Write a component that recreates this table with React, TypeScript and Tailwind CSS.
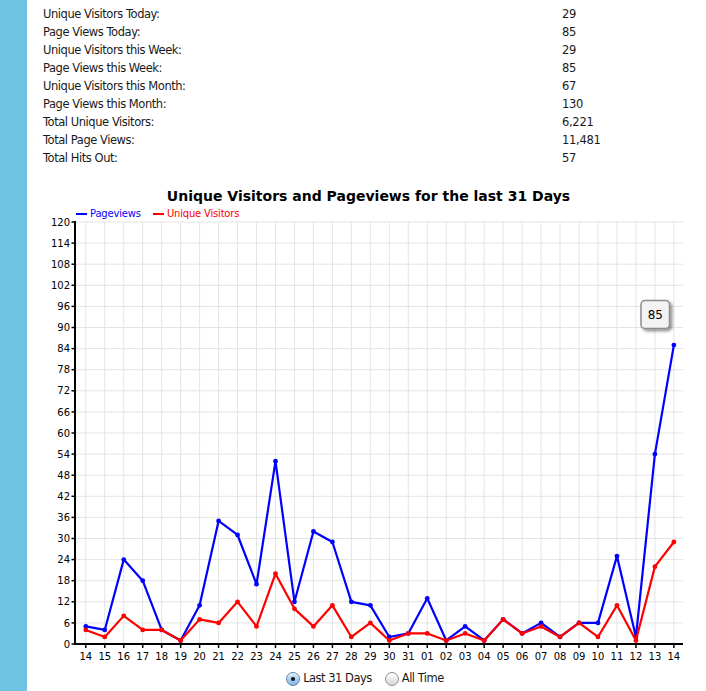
const stats: [string, string][] = [
  ["Unique Visitors Today:", "29"],
  ["Page Views Today:", "85"],
  ["Unique Visitors this Week:", "29"],
  ["Page Views this Week:", "85"],
  ["Unique Visitors this Month:", "67"],
  ["Page Views this Month:", "130"],
  ["Total Unique Visitors:", "6,221"],
  ["Total Page Views:", "11,481"],
  ["Total Hits Out:", "57"],
];

const days = [
  "14", "15", "16", "17", "18", "19", "20", "21", "22", "23", "24", "25", "26", "27", "28", "29", "30", "31",
  "01", "02", "03", "04", "05", "06", "07", "08", "09", "10", "11", "12", "13", "14",
];

const pageviews = [5, 4, 24, 18, 4, 1, 11, 35, 31, 17, 52, 12, 32, 29, 12, 11, 2, 3, 13, 1, 5, 1, 7, 3, 6, 2, 6, 6, 25, 2, 54, 85];
const visitors = [4, 2, 8, 4, 4, 1, 7, 6, 12, 5, 20, 10, 5, 11, 2, 6, 1, 3, 3, 1, 3, 1, 7, 3, 5, 2, 6, 2, 11, 1, 22, 29];

// chart geometry in page pixels
const X0 = 85.8;
const DX = 18.97;
const AXIS_X = 75;
const RIGHT = 683;
const TOP = 222;
const BOTTOM = 644;
const PX_PER_UNIT = (BOTTOM - TOP) / 120;

const px = (i: number) => X0 + i * DX;
const py = (v: number) => BOTTOM - v * PX_PER_UNIT;

const yTicks = Array.from({ length: 21 }, (_, i) => i * 6);

const Series = ({ data, color }: { data: number[]; color: string }) => (
  <g>
    <polyline
      points={data.map((v, i) => `${px(i)},${py(v)}`).join(" ")}
      fill="none"
      stroke={color}
      strokeWidth={2.2}
      strokeLinejoin="round"
    />
    {data.map((v, i) => (
      <circle key={i} cx={px(i)} cy={py(v)} r={2.4} fill={color} />
    ))}
  </g>
);

const Chart = () => (
  <svg
    width={679}
    height={488}
    viewBox="27 180 679 488"
    className="mt-[13px] block"
    fontFamily="'DejaVu Sans', sans-serif"
  >
    <defs>
      <filter id="tipShadow" x="-30%" y="-30%" width="170%" height="170%">
        <feDropShadow dx="2" dy="2" stdDeviation="1.5" floodColor="#000" floodOpacity="0.45" />
      </filter>
    </defs>

    <text x={368.5} y={200.7} textAnchor="middle" fontSize={14} fontWeight="bold" fill="#000">
      Unique Visitors and Pageviews for the last 31 Days
    </text>

    {/* legend */}
    <line x1={76} x2={87} y1={214} y2={214} stroke="#0000ff" strokeWidth={2} />
    <text x={90} y={217.4} fontSize={10} fill="#0000ff" letterSpacing={-0.2}>
      Pageviews
    </text>
    <line x1={153} x2={164} y1={214} y2={214} stroke="#ff0000" strokeWidth={2} />
    <text x={167} y={217.4} fontSize={10} fill="#ff0000" letterSpacing={-0.2}>
      Unique Visitors
    </text>

    {/* grid */}
    {yTicks.map((v) => (
      <line key={`h${v}`} x1={AXIS_X} x2={RIGHT} y1={py(v)} y2={py(v)} stroke="#e4e4e4" strokeWidth={1} />
    ))}
    {days.map((_, i) => (
      <line key={`v${i}`} x1={px(i)} x2={px(i)} y1={TOP} y2={BOTTOM} stroke="#e4e4e4" strokeWidth={1} />
    ))}

    {/* axes */}
    <line x1={AXIS_X} x2={AXIS_X} y1={TOP - 1} y2={BOTTOM + 1} stroke="#000" strokeWidth={2} />
    <line x1={AXIS_X - 1} x2={RIGHT} y1={BOTTOM} y2={BOTTOM} stroke="#000" strokeWidth={2} />

    {yTicks.map((v) => (
      <g key={`yt${v}`}>
        <line x1={71.5} x2={AXIS_X} y1={py(v)} y2={py(v)} stroke="#000" strokeWidth={1.5} />
        <text x={70} y={py(v) + 3.6} textAnchor="end" fontSize={10} fill="#000">
          {v}
        </text>
      </g>
    ))}

    {days.map((d, i) => (
      <g key={`xt${i}`}>
        <line x1={px(i)} x2={px(i)} y1={BOTTOM} y2={BOTTOM + 4} stroke="#000" strokeWidth={1.5} />
        <text x={px(i)} y={660} textAnchor="middle" fontSize={10} fill="#000">
          {d}
        </text>
      </g>
    ))}

    <Series data={pageviews} color="#0000ff" />
    <Series data={visitors} color="#ff0000" />

    {/* tooltip */}
    <rect
      x={641}
      y={300.5}
      width={28.5}
      height={28}
      rx={4}
      fill="#f3f3f3"
      stroke="#8c8c8c"
      strokeWidth={1.5}
      filter="url(#tipShadow)"
    />
    <text x={655.3} y={318.8} textAnchor="middle" fontSize={12} fill="#000">
      85
    </text>
  </svg>
);

const Radio = ({ checked, label }: { checked?: boolean; label: string }) => (
  <label className="flex items-center gap-[3px]">
    <span
      className={
        checked
          ? "flex h-[14px] w-[14px] items-center justify-center rounded-full border border-[#5b7fa6] bg-gradient-to-b from-[#d9ecfb] to-[#7fb6e6] shadow-[inset_0_1px_1px_rgba(255,255,255,0.8)]"
          : "flex h-[14px] w-[14px] items-center justify-center rounded-full border border-[#8e8e8e] bg-gradient-to-b from-[#ffffff] to-[#d6d6d6]"
      }
    >
      {checked && <span className="h-[4px] w-[4px] rounded-full bg-[#111]" />}
    </span>
    <span className="text-[11.5px] tracking-[-0.5px]">{label}</span>
  </label>
);

export default function App() {
  return (
    <div className="flex min-h-[691px] w-[706px] bg-white font-['DejaVu_Sans',sans-serif] text-[11.5px] text-[#1a1a1a]">
      <div className="w-[27px] shrink-0 bg-[#6fc3e2]" />
      <div className="flex-1">
        <div className="pl-[16px] pt-[5px]">
          {stats.map(([label, value]) => (
            <div key={label} className="flex h-[18px] items-center leading-[18px]">
              <span className="w-[519px] tracking-[-0.45px]">{label}</span>
              <span className="tracking-[-0.3px]">{value}</span>
            </div>
          ))}
        </div>
        <Chart />
        <div className="flex h-[22px] items-center justify-center gap-[13px] pr-[3px]">
          <Radio checked label="Last 31 Days" />
          <Radio label="All Time" />
        </div>
      </div>
    </div>
  );
}
